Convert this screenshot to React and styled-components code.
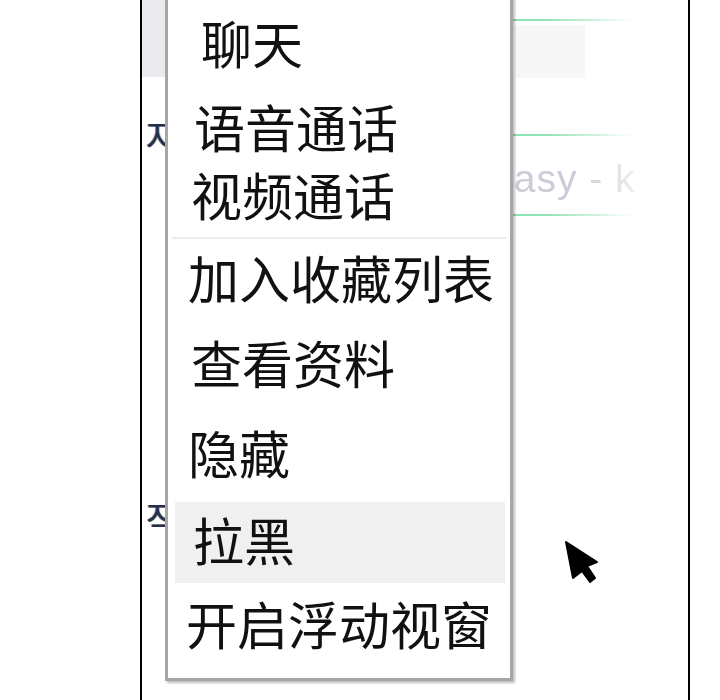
import styled, { createGlobalStyle } from 'styled-components';

const GlobalStyle = createGlobalStyle`
	html, body {
		margin: 0;
		padding: 0;
		background: #ffffff;
	}
`;

const Stage = styled.div`
	position: relative;
	width: 720px;
	height: 700px;
	padding-left: 140px;
	box-sizing: border-box;
	overflow: hidden;
	background: #ffffff;
`;

const Window = styled.div`
	display: grid;
	grid-template-columns: 23px 1fr;
	width: 550px;
	height: 700px;
	box-sizing: border-box;
	border-left: 2px solid #000000;
	border-right: 2px solid #000000;
	background: #ffffff;
`;

const Strip = styled.div`
	display: flex;
	flex-direction: column;
	overflow: hidden;
	white-space: nowrap;
`;

const StripHeader = styled.div`
	height: 77px;
	flex-shrink: 0;
	background: #ebebef;
`;

const StripLabel = styled.div`
	margin-top: ${(p) => p.$top}px;
	padding-left: 4px;
	font-family: 'Noto Sans CJK KR', 'Noto Sans', sans-serif;
	font-size: 36px;
	line-height: 40px;
	color: #26304a;
	text-shadow: -1px 0 0 rgba(40, 120, 220, 0.55), 1px 0 0 rgba(220, 130, 40, 0.55);
`;

const Main = styled.div`
	display: flex;
	flex-direction: column;
`;

const ListItem = styled.div`
	display: flex;
	align-items: center;
	height: ${(p) => p.$h}px;
	padding-left: ${(p) => p.$indent || 0}px;
	border-bottom: 2px solid transparent;
	border-image: linear-gradient(
			to right,
			rgba(100, 214, 150, 0.95) 0,
			rgba(100, 214, 150, 0.7) 380px,
			rgba(100, 214, 150, 0) 468px,
			rgba(255, 255, 255, 0) 100%
		)
		1;
`;

const Thumb = styled.div`
	align-self: flex-start;
	margin-top: 4px;
	width: 70px;
	height: 53px;
	background: #f7f7f7;
`;

const Title = styled.span`
	padding-top: 8px;
	font-family: 'Liberation Sans', Arial, sans-serif;
	font-size: 39px;
	color: #ccccd8;
	letter-spacing: 1px;
	-webkit-mask-image: linear-gradient(to right, #000 0, #000 60%, rgba(0, 0, 0, 0.35) 100%);
	mask-image: linear-gradient(to right, #000 0, #000 60%, rgba(0, 0, 0, 0.35) 100%);
`;

const Menu = styled.div`
	position: absolute;
	left: 165px;
	top: -8px;
	width: 348px;
	box-sizing: border-box;
	padding-bottom: 8px;
	border: 3px solid #a6a6a6;
	background: #ffffff;
	box-shadow: 2px 2px 2px rgba(0, 0, 0, 0.25);
`;

const MenuItem = styled.div`
	display: flex;
	align-items: center;
	height: ${(p) => p.$h}px;
	box-sizing: border-box;
	padding-bottom: 6px;
	margin: 0 ${(p) => (p.$active ? '5px 0 7px' : '0')};
	padding-left: ${(p) => 20 + p.$indent - (p.$active ? 7 : 0)}px;
	background: ${(p) => (p.$active ? '#f0f0f0' : 'transparent')};
	font-family: 'Noto Sans CJK SC', 'Noto Sans', sans-serif;
	font-size: 51px;
	line-height: 1;
	color: #111111;
	white-space: nowrap;
`;

const Separator = styled.div`
	height: 2px;
	margin: 6px 4px 0 4px;
	background: #ececec;
`;

const Cursor = styled.svg`
	position: absolute;
	left: 560px;
	top: 536px;
	width: 44px;
	height: 52px;
`;

const items = [
	{ label: '聊天', h: 100, indent: 13 },
	{ label: '语音通话', h: 68, indent: 6 },
	{ label: '视频通话', h: 68, indent: 3, separator: true },
	{ label: '加入收藏列表', h: 83, indent: 0 },
	{ label: '查看资料', h: 87, indent: 3 },
	{ label: '隐藏', h: 93, indent: 0 },
	{ label: '拉黑', h: 81, indent: 5, active: true },
	{ label: '开启浮动视窗', h: 87, indent: -2 },
];

export default function App() {
	return (
		<>
			<GlobalStyle />
			<Stage>
				<Window>
					<Strip>
						<StripHeader />
						<StripLabel $top={38}>자기소개</StripLabel>
						<StripLabel $top={342}>작업</StripLabel>
					</Strip>
					<Main>
						<ListItem $h={19} />
						<ListItem $h={113} $indent={350}>
							<Thumb />
						</ListItem>
						<ListItem $h={78} $indent={326}>
							<Title>easy - k</Title>
						</ListItem>
					</Main>
				</Window>

				<Menu>
					{items.map((item) => (
						<div key={item.label}>
							<MenuItem $h={item.h} $indent={item.indent} $active={item.active}>
								{item.label}
							</MenuItem>
							{item.separator && <Separator />}
						</div>
					))}
				</Menu>

				<Cursor viewBox="0 0 44 52">
					<path
						d="M6 6 L37 26 L27 30 L35 42 L30 46 L22 35 L13 42 Z"
						fill="#000000"
						stroke="#000000"
						strokeWidth="2"
						strokeLinejoin="round"
					/>
				</Cursor>
			</Stage>
		</>
	);
}
